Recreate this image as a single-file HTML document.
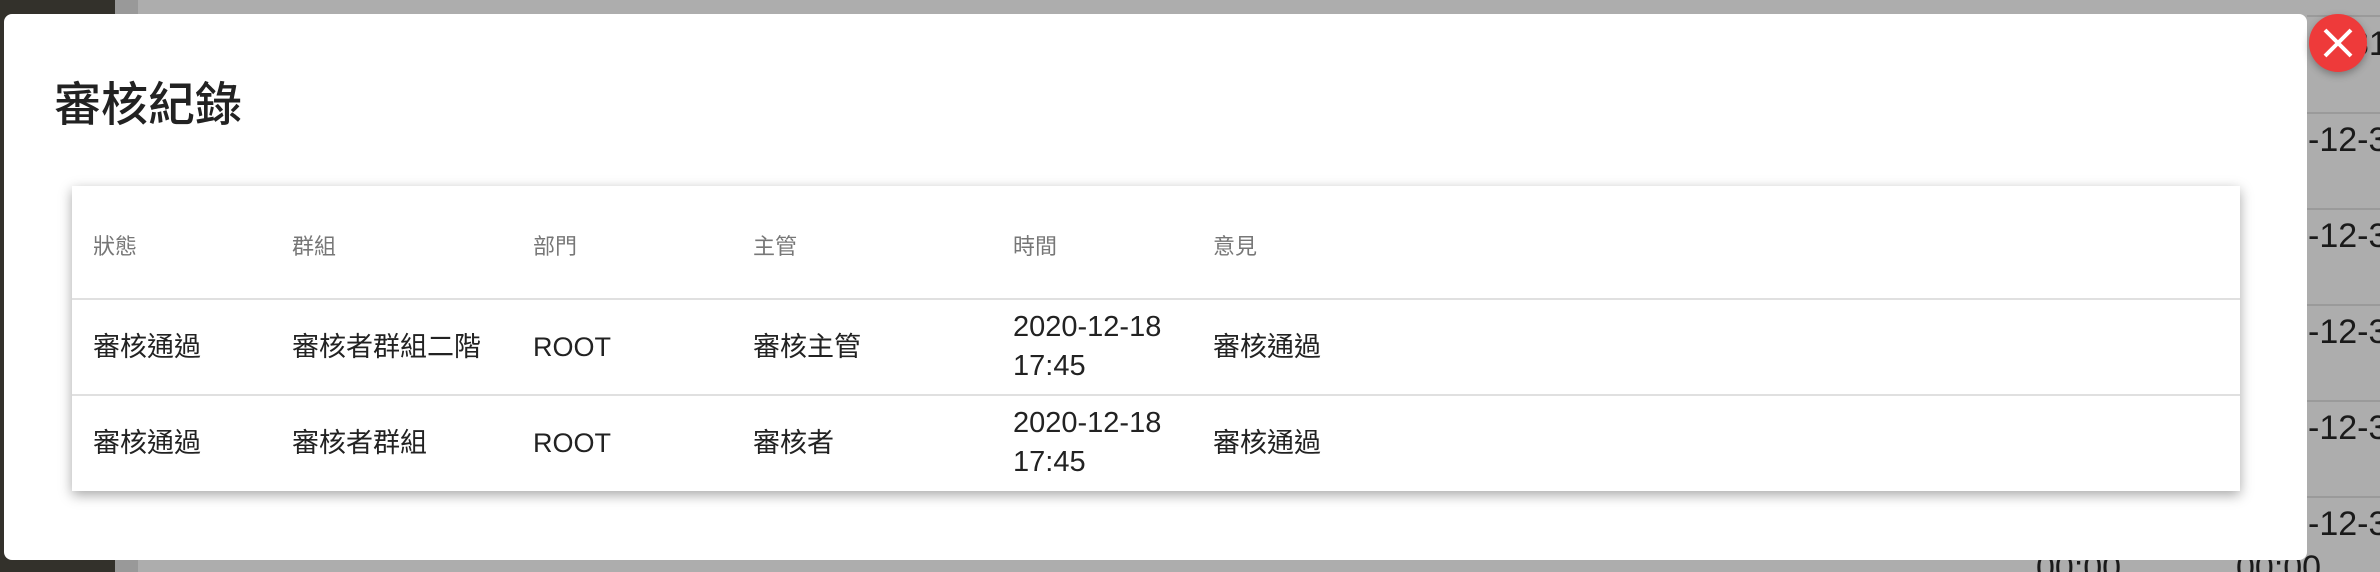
<!DOCTYPE html>
<html style="width:2380px;height:572px;overflow:hidden"><head><meta charset="utf-8"><style>
*{margin:0;padding:0;box-sizing:border-box}
body{width:2380px;height:572px;overflow:hidden;position:relative;background:#adadad;font-family:"Liberation Sans","Noto Sans CJK TC",sans-serif}
.a{position:absolute}
.bgt{position:absolute;font-size:34px;color:#1a1a1a;left:2308px;white-space:nowrap;line-height:40px}
.ln{position:absolute;left:2307px;width:80px;height:2px;background:#9a9a9a}
.h{position:absolute;font-size:22px;color:#777;top:229px;white-space:nowrap}
.c{position:absolute;font-size:27px;color:#222;line-height:39px;white-space:nowrap}
.t{font-size:29px}
</style></head><body>
<div class="a" style="left:0;top:0;width:115px;height:572px;background:#33312b"></div>
<div class="a" style="left:115px;top:0;width:23px;height:572px;background:#999"></div>
<div class="ln" style="top:15px"></div><div class="ln" style="top:112px"></div><div class="ln" style="top:208px"></div><div class="ln" style="top:304px"></div><div class="ln" style="top:400px"></div><div class="ln" style="top:496px"></div>
<div class="bgt" style="top:24px;left:2350px">31</div>
<div class="bgt" style="top:120px">-12-31</div>
<div class="bgt" style="top:216px">-12-31</div>
<div class="bgt" style="top:312px">-12-31</div>
<div class="bgt" style="top:408px">-12-31</div>
<div class="bgt" style="top:504px">-12-31</div>
<div class="bgt" style="top:548px;left:2036px">00:00</div>
<div class="bgt" style="top:548px;left:2236px">00:00</div>
<div class="a" style="left:4px;top:14px;width:2303px;height:546px;background:#fff;border-radius:8px"></div>
<div class="a" style="left:54px;top:66px;font-size:47px;font-weight:500;color:#222;white-space:nowrap">審核紀錄</div>
<div class="a" style="left:72px;top:186px;width:2168px;height:305px;background:#fff;box-shadow:0 4px 12px rgba(0,0,0,.35)"></div>
<div class="a" style="left:72px;top:298px;width:2168px;height:2px;background:#e0e0e0"></div>
<div class="a" style="left:72px;top:394px;width:2168px;height:2px;background:#e0e0e0"></div>
<div class="h" style="left:93px">狀態</div><div class="h" style="left:292px">群組</div><div class="h" style="left:533px">部門</div><div class="h" style="left:753px">主管</div><div class="h" style="left:1013px">時間</div><div class="h" style="left:1213px">意見</div>
<div class="c" style="left:93px;top:328px">審核通過</div><div class="c" style="left:292px;top:328px">審核者群組二階</div><div class="c" style="left:533px;top:328px">ROOT</div><div class="c" style="left:753px;top:328px">審核主管</div><div class="c t" style="left:1013px;top:308px">2020-12-18<br>17:45</div><div class="c" style="left:1213px;top:328px">審核通過</div>
<div class="c" style="left:93px;top:424px">審核通過</div><div class="c" style="left:292px;top:424px">審核者群組</div><div class="c" style="left:533px;top:424px">ROOT</div><div class="c" style="left:753px;top:424px">審核者</div><div class="c t" style="left:1013px;top:404px">2020-12-18<br>17:45</div><div class="c" style="left:1213px;top:424px">審核通過</div>
<div class="a" style="left:2309px;top:14px;width:58px;height:58px;border-radius:50%;background:#ee3a3a;box-shadow:0 3px 8px rgba(0,0,0,.3)">
<svg width="58" height="58" viewBox="0 0 58 58"><path d="M16 16L42 42M42 16L16 42" stroke="#fff" stroke-width="4"/></svg></div>
</body></html>
